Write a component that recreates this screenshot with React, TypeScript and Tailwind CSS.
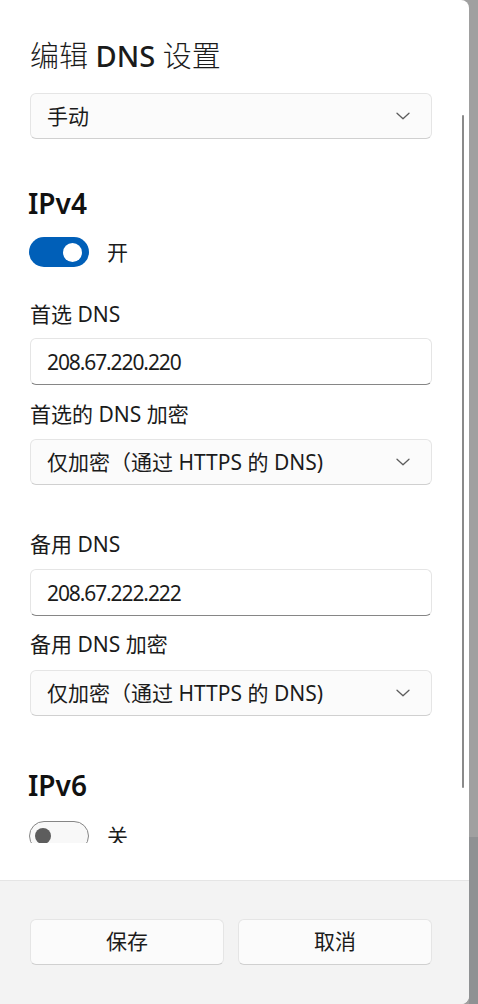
const font = "font-['Noto_Sans','Noto_Sans_CJK_SC',sans-serif]";

function Chevron() {
  return (
    <svg width="14" height="8" viewBox="0 0 14 8" fill="none" className="shrink-0">
      <path d="M1 1.2 7 6.8 13 1.2" stroke="#5c5c5c" strokeWidth="1.3" strokeLinecap="round" strokeLinejoin="round" />
    </svg>
  );
}

function Select({ value, className = "" }: { value: string; className?: string }) {
  return (
    <div
      className={`flex h-[46px] items-center justify-between rounded-[6px] border border-[#e5e5e5] border-b-[#d0d0d0] bg-[#fbfbfb] pl-[16px] pr-[21px] text-[21px] leading-[28px] text-[#1b1b1b] ${className}`}
    >
      <span>{value}</span>
      <Chevron />
    </div>
  );
}

function Field({ value, className = "" }: { value: string; className?: string }) {
  return (
    <div
      className={`flex h-[47px] items-center rounded-[6px] border border-[#e5e5e5] border-b-[1.5px] border-b-[#868686] bg-white pl-[16px] text-[21px] leading-[28px] tracking-[-1.1px] text-[#1b1b1b] ${className}`}
    >
      {value}
    </div>
  );
}

function Label({ text, className = "" }: { text: string; className?: string }) {
  return <div className={`h-[28px] text-[21px] leading-[28px] text-[#1b1b1b] ${className}`}>{text}</div>;
}

function Toggle({ on, label, className = "" }: { on: boolean; label: string; className?: string }) {
  return (
    <div className={`flex h-[30px] items-center gap-[18px] ${className}`}>
      {on ? (
        <div className="flex h-[30px] w-[60px] items-center justify-end rounded-full bg-[#005fb8] pr-[7px]">
          <div className="h-[19px] w-[19px] rounded-full bg-white" />
        </div>
      ) : (
        <div className="flex h-[30px] w-[60px] items-center rounded-full border-[1.5px] border-[#868686] bg-[#f8f8f8] pl-[5px]">
          <div className="h-[16px] w-[16px] rounded-full bg-[#5d5d5d]" />
        </div>
      )}
      <span className="text-[21px] leading-[28px] text-[#1b1b1b]">{label}</span>
    </div>
  );
}

function Heading({ text, className = "" }: { text: string; className?: string }) {
  return <div className={`h-[36px] text-[28px] font-semibold leading-[36px] text-[#111] ${className}`}>{text}</div>;
}

export default function App() {
  return (
    <div className={`flex h-[1004px] w-[478px] overflow-hidden bg-[#a0a0a0] ${font}`}>
      <div className="flex h-full w-[469px] shrink-0 flex-col overflow-hidden rounded-r-[8px] bg-white">
        <div className="relative h-[843px] shrink-0 overflow-hidden pl-[30px] pr-[37px]">
          <div className="mt-[36px] h-[40px] text-[29px] leading-[40px] text-[#1b1b1b]">
            <span className="font-light">编辑</span> <span className="font-medium">DNS</span>{" "}
            <span className="font-light">设置</span>
          </div>
          <Select value="手动" className="mt-[17px]" />

          <Heading text="IPv4" className="mt-[46px] -ml-[2px]" />
          <Toggle on label="开" className="mt-[16px] -ml-[1px]" />

          <Label text="首选 DNS" className="mt-[33px]" />
          <Field value="208.67.220.220" className="mt-[10px]" />
          <Label text="首选的 DNS 加密" className="mt-[15px]" />
          <Select value="仅加密（通过 HTTPS 的 DNS)" className="mt-[11px]" />

          <Label text="备用 DNS" className="mt-[45px]" />
          <Field value="208.67.222.222" className="mt-[11px]" />
          <Label text="备用 DNS 加密" className="mt-[14px]" />
          <Select value="仅加密（通过 HTTPS 的 DNS)" className="mt-[12px]" />

          <Heading text="IPv6" className="mt-[51px] -ml-[2px]" />
          <Toggle on={false} label="关" className="mt-[18px] -ml-[1px]" />

          <div className="absolute right-[5px] top-[115px] h-[673px] w-[2.5px] rounded-full bg-[#8a8a8a]" />
        </div>
        <div className="h-[37px] shrink-0" />
        <div className="flex flex-1 gap-[14px] border-t border-[#e5e5e5] bg-[#f3f3f3] pl-[30px] pr-[37px] pt-[38px]">
          <button className="flex h-[46px] flex-1 items-center justify-center rounded-[6px] border border-[#e5e5e5] border-b-[#d0d0d0] bg-[#fbfbfb] text-[21px] text-[#1b1b1b]">
            保存
          </button>
          <button className="flex h-[46px] flex-1 items-center justify-center rounded-[6px] border border-[#e5e5e5] border-b-[#d0d0d0] bg-[#fbfbfb] text-[21px] text-[#1b1b1b]">
            取消
          </button>
        </div>
      </div>
      <div className="flex flex-1 flex-col">
        <div className="h-[837px] bg-[#a0a0a0]" />
        <div className="flex-1 bg-[#8f9193]" />
      </div>
    </div>
  );
}
